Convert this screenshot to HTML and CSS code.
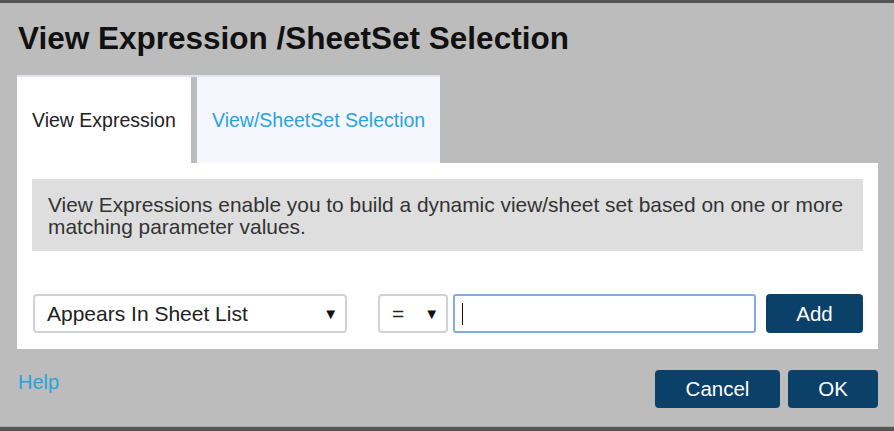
FILE: index.html
```html
<!DOCTYPE html>
<html lang="en">
<head>
  <meta charset="UTF-8" />
  <title>View Expression /SheetSet Selection</title>
  <link rel="stylesheet" href="styles.css">
</head>
<body>
  <div class="dialog">
    <h1 class="title">View Expression /SheetSet Selection</h1>

    <div class="tabs">
      <div class="tab active">View Expression</div>
      <div class="tab">View/SheetSet Selection</div>
    </div>

    <section class="panel">
      <p class="info">View Expressions enable you to build a dynamic view/sheet set based on one or more matching parameter values.</p>
      <div class="filter-row">
        <div class="select param"><span>Appears In Sheet List</span><span class="arrow">&#9660;</span></div>
        <div class="select op"><span>=</span><span class="arrow">&#9660;</span></div>
        <div class="text-input"><span class="caret"></span></div>
        <button class="btn add">Add</button>
      </div>
    </section>

    <footer class="actions">
      <a class="help" href="#">Help</a>
      <div class="buttons">
        <button class="btn cancel">Cancel</button>
        <button class="btn ok">OK</button>
      </div>
    </footer>
  </div>
</body>
</html>
```
FILE: styles.css
```css
:root {
  --dialog-bg: #bcbcbc;
  --navy: #0b4068;
  --link: #29a3dc;
  --text: #333333;
}
*, *::before, *::after { box-sizing: border-box; }
body {
  margin: 0;
  background: #555555;
  font-family: 'Liberation Sans', Arial, sans-serif;
  color: var(--text);
  overflow: hidden;
}
.dialog {
  margin-top: 3px;
  height: 424px;
  background: var(--dialog-bg);
  padding: 0 16px 0 17px;
  border-bottom: 1px solid #a8a8a8;
}
.title {
  margin: 0;
  padding: 18px 0 0 1px;
  height: 72px;
  font-size: 31.5px; line-height: 34px;
  font-weight: 700;
  color: #111111;
}
.tabs {
  display: flex; gap: 6px;
  width: 423px; height: 88px;
  border-top: 2px solid #e3e3ee;
}
.tab {
  display: flex; align-items: center;
  padding: 0 15px;
  font-size: 19.5px;
  white-space: nowrap;
  color: var(--link);
  background: #f5f6ff;
  flex: 1;
}
.tab.active {
  flex: 0 0 174px;
  background: #ffffff;
  color: #222222;
}
.panel {
  background: #ffffff;
  height: 186px;
  padding: 16px 15px;
}
.info {
  margin: 0;
  height: 72px;
  padding: 15px 6px 13px 16px;
  background: #dedede;
  font-size: 20.9px; line-height: 22px;
}
.filter-row {
  display: flex; align-items: center;
  margin-top: 43px;
  height: 39px;
}
.select {
  display: flex; justify-content: space-between; align-items: center;
  height: 39px;
  padding: 0 7px 0 12px;
  border: 2px solid #d2d2d2; border-radius: 4px;
  font-size: 21px; color: #222222;
}
.select .arrow { font-size: 15px; color: #111111; }
.select.param { width: 314px; margin-left: 1px; }
.select.op { width: 70px; margin-left: 31px; }
.text-input {
  display: flex; align-items: center;
  width: 303px; height: 39px;
  margin-left: 5px;
  padding-left: 7px;
  border: 2px solid #80aae8; border-radius: 3px;
}
.caret {
  width: 1px; height: 22px;
  background: #111111;
}
.btn {
  border: none; border-radius: 4px;
  background: var(--navy);
  color: #ffffff;
  font-family: inherit;
  font-size: 20.5px;
  cursor: pointer;
}
.btn.add { width: 97px; height: 39px; margin-left: 10px; }
.actions {
  display: flex; justify-content: space-between;
  padding: 21px 0 0 1px;
}
.help {
  margin-top: 1px;
  font-size: 20px;
  color: var(--link);
  text-decoration: none;
}
.buttons { display: flex; gap: 8px; }
.btn.cancel { width: 125px; height: 38px; }
.btn.ok { width: 90px; height: 38px; }
```
